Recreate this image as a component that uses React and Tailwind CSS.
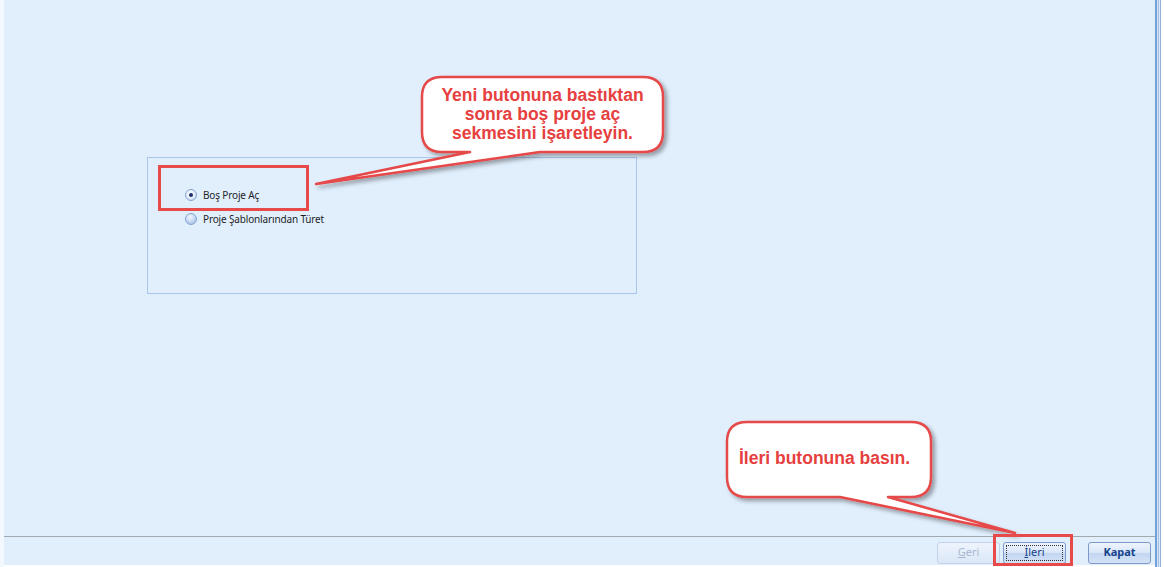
import React from "react";

const RED = "#e54848";

function Radio({ checked, label }) {
  return (
    <div className="flex items-center h-[14px]">
      <span
        className={
          "w-[12px] h-[12px] rounded-full border border-[#86a5d3] flex items-center justify-center " +
          (checked
            ? "bg-[radial-gradient(circle_at_45%_40%,#ffffff_0%,#e6eefa_50%,#a9c2e6_100%)]"
            : "bg-[radial-gradient(circle_at_40%_30%,#f2f7fe_0%,#c6d8f1_50%,#93b3df_100%)]")
        }
      >
        {checked && <span className="w-[4px] h-[4px] rounded-full bg-[#1b2f6b]" />}
      </span>
      <span className="ml-[6px] text-[10px] tracking-[-0.15px] leading-none text-[#1e1e1e]">{label}</span>
    </div>
  );
}

function Btn({ children, disabled, focused, bold }) {
  return (
    <div
      className={
        "w-[63px] h-[22px] rounded-[3px] border flex items-center justify-center p-[2px] " +
        (disabled
          ? "border-[#c3d3ea] bg-[linear-gradient(#eef4fd,#dbe7f7)]"
          : "border-[#7d9bca] bg-[linear-gradient(#eef4fd_0%,#d9e6f8_50%,#c3d6f1_51%,#d3e2f6_100%)]")
      }
    >
      <div
        className={
          "w-full h-full flex items-center justify-center text-[11px] " +
          (focused ? "border border-dotted border-[#333] " : "") +
          (disabled ? "text-[#a7b7d1] " : "text-[#15428b] ") +
          (bold ? "font-bold" : "")
        }
      >
        {children}
      </div>
    </div>
  );
}

export default function App() {
  return (
    <div className="relative w-[1164px] h-[567px] bg-white flex overflow-hidden" style={{ fontFamily: '"Noto Sans", "Open Sans", sans-serif' }}>
      <div className="w-[4px] bg-[#f3f8fe]" />
      <div className="w-[1151px] h-[565px] flex flex-col bg-[#e1effd]">
        <div className="h-[536px] pt-[157px] pl-[143px]">
          <div className="w-[490px] h-[137px] border border-[#a9c6ec] pt-[30px] pl-[37px] flex flex-col gap-[10px]">
            <Radio checked label="Boş Proje Aç" />
            <Radio label="Proje Şablonlarından Türet" />
          </div>
        </div>
        <div className="h-px bg-[#a3a9b1]" />
        <div className="flex-1 flex items-center justify-end pr-[4px] pt-[3px]">
          <Btn disabled>
            <span className="underline">G</span>eri
          </Btn>
          <div className="w-[3px]" />
          <Btn focused>
            <span className="underline">İ</span>leri
          </Btn>
          <div className="w-[22px]" />
          <Btn bold>Kapat</Btn>
        </div>
      </div>
      <div className="flex h-[567px]">
        <div className="w-[2px] bg-[#72a0d9]" />
        <div className="w-px bg-[#d4e4f8]" />
        <div className="w-px bg-[#a3c0e6]" />
        <div className="w-px bg-[#dbe9fb]" />
        <div className="w-px bg-[#8fb2e0]" />
        <div className="w-[3px] bg-white" />
      </div>

      {/* annotations */}
      <svg className="absolute left-0 top-0 pointer-events-none" width="1164" height="567">
        <defs>
          <filter id="sh" x="-10%" y="-10%" width="130%" height="140%">
            <feDropShadow dx="3" dy="3" stdDeviation="2" floodColor="#000" floodOpacity="0.35" />
          </filter>
        </defs>
        <path
          d="M 442,77 H 643 Q 663,77 663,97 V 132 Q 663,152 643,152 H 540 L 316,184 L 470,152 H 442 Q 422,152 422,132 V 97 Q 422,77 442,77 Z"
          fill="#fff"
          stroke={RED}
          strokeWidth="2.5"
          strokeLinejoin="round"
          filter="url(#sh)"
        />
        <path
          d="M 747,422 H 911 Q 931,422 931,442 V 477 Q 931,497 911,497 H 888 L 1015,533 L 840,497 H 747 Q 727,497 727,477 V 442 Q 727,422 747,422 Z"
          fill="#fff"
          stroke={RED}
          strokeWidth="2.5"
          strokeLinejoin="round"
          filter="url(#sh)"
        />
      </svg>
      <div className="absolute left-[158px] top-[165px] w-[151px] h-[46px] border-[3px] border-[#e84a4a]" />
      <div className="absolute left-[993px] top-[534px] w-[80px] h-[32px] border-[3px] border-[#e84a4a]" />
      <div
        className="absolute left-[422px] top-[86px] w-[241px] text-center text-[17.5px] leading-[19px] font-bold text-[#e6403f]"
        style={{ fontFamily: '"Liberation Sans", Arial, sans-serif' }}
      >
        Yeni butonuna bastıktan
        <br />
        sonra boş proje aç
        <br />
        sekmesini işaretleyin.
      </div>
      <div
        className="absolute left-[739px] top-[448px] text-[17.5px] leading-[20px] font-bold text-[#e6403f]"
        style={{ fontFamily: '"Liberation Sans", Arial, sans-serif' }}
      >
        İleri butonuna basın.
      </div>
    </div>
  );
}
